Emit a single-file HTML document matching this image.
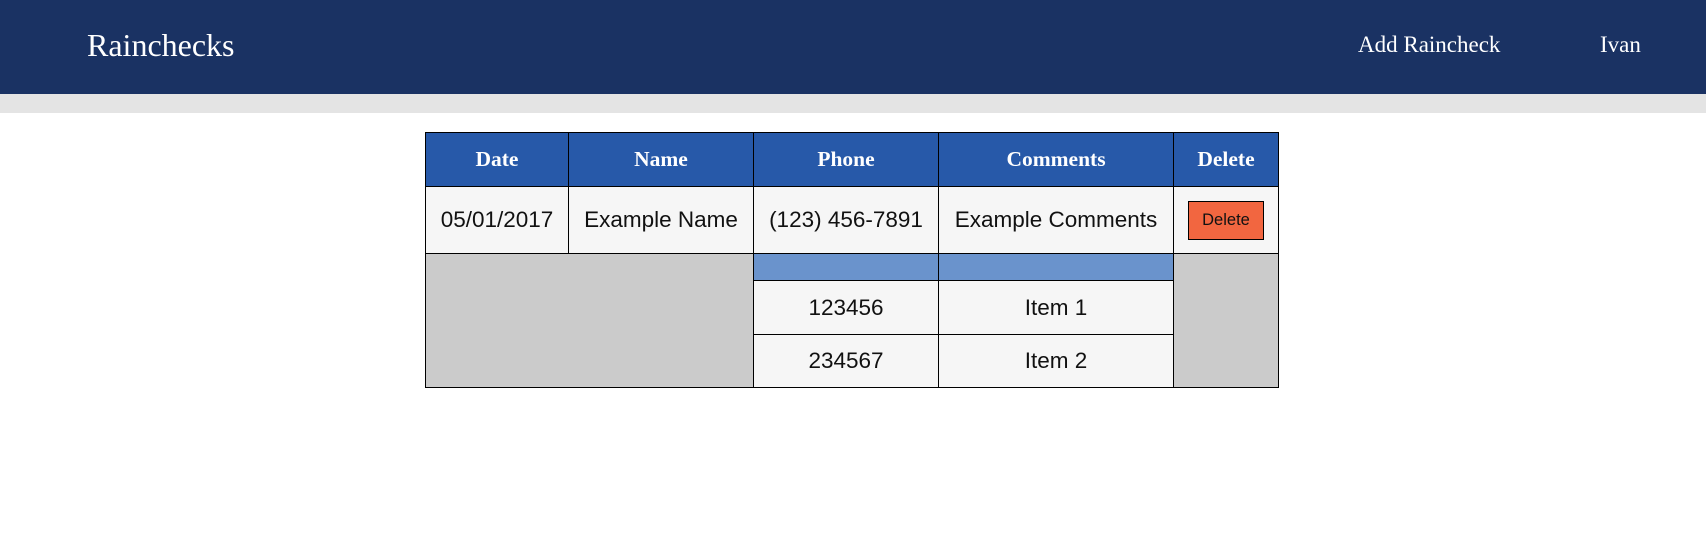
<!DOCTYPE html>
<html><head><style>
body{margin:0;width:1706px;height:534px;background:#fff;position:relative;overflow:hidden;font-family:"Liberation Sans",Arial,sans-serif}
.nav{position:absolute;left:0;top:0;width:1706px;height:94px;background:#1a3263;color:#fff;font-family:"Liberation Serif",serif}
.band{position:absolute;left:0;top:94px;width:1706px;height:19px;background:#e4e4e4}
.c{position:absolute;box-sizing:border-box;border:1px solid #000;display:flex;align-items:center;justify-content:center;font-size:22.5px;color:#111}
.h{background:#2759a9;color:#fff;font-family:"Liberation Serif",serif;font-weight:bold;font-size:21.5px}
.r{background:#f6f6f6}
.g{background:#cbcbcb}
.s{background:#6a93cc}
</style></head><body>
<div class="nav">
<div style="position:absolute;left:87px;top:27px;font-size:32px">Rainchecks</div>
<div style="position:absolute;left:1358px;top:32px;font-size:23px">Add Raincheck</div>
<div style="position:absolute;left:1600px;top:32px;font-size:23px">Ivan</div>
</div>
<div class="band"></div>

<div class="c h" style="left:425px;top:132px;width:144px;height:55px">Date</div>
<div class="c h" style="left:568px;top:132px;width:186px;height:55px">Name</div>
<div class="c h" style="left:753px;top:132px;width:186px;height:55px">Phone</div>
<div class="c h" style="left:938px;top:132px;width:236px;height:55px">Comments</div>
<div class="c h" style="left:1173px;top:132px;width:106px;height:55px">Delete</div>

<div class="c r" style="left:425px;top:186px;width:144px;height:68px">05/01/2017</div>
<div class="c r" style="left:568px;top:186px;width:186px;height:68px">Example Name</div>
<div class="c r" style="left:753px;top:186px;width:186px;height:68px">(123) 456-7891</div>
<div class="c r" style="left:938px;top:186px;width:236px;height:68px">Example Comments</div>
<div class="c r" style="left:1173px;top:186px;width:106px;height:68px"><div style="width:76px;height:39px;box-sizing:border-box;border:1px solid #000;background:#f26640;font-size:16.5px;display:flex;align-items:center;justify-content:center">Delete</div></div>

<div class="c g" style="left:425px;top:253px;width:329px;height:135px"></div>
<div class="c g" style="left:1173px;top:253px;width:106px;height:135px"></div>
<div class="c s" style="left:753px;top:253px;width:186px;height:28px;border-bottom:1px solid #000"></div>
<div class="c s" style="left:938px;top:253px;width:236px;height:28px"></div>
<div class="c r" style="left:753px;top:280px;width:186px;height:55px">123456</div>
<div class="c r" style="left:938px;top:280px;width:236px;height:55px">Item 1</div>
<div class="c r" style="left:753px;top:334px;width:186px;height:54px">234567</div>
<div class="c r" style="left:938px;top:334px;width:236px;height:54px">Item 2</div>
</body></html>
